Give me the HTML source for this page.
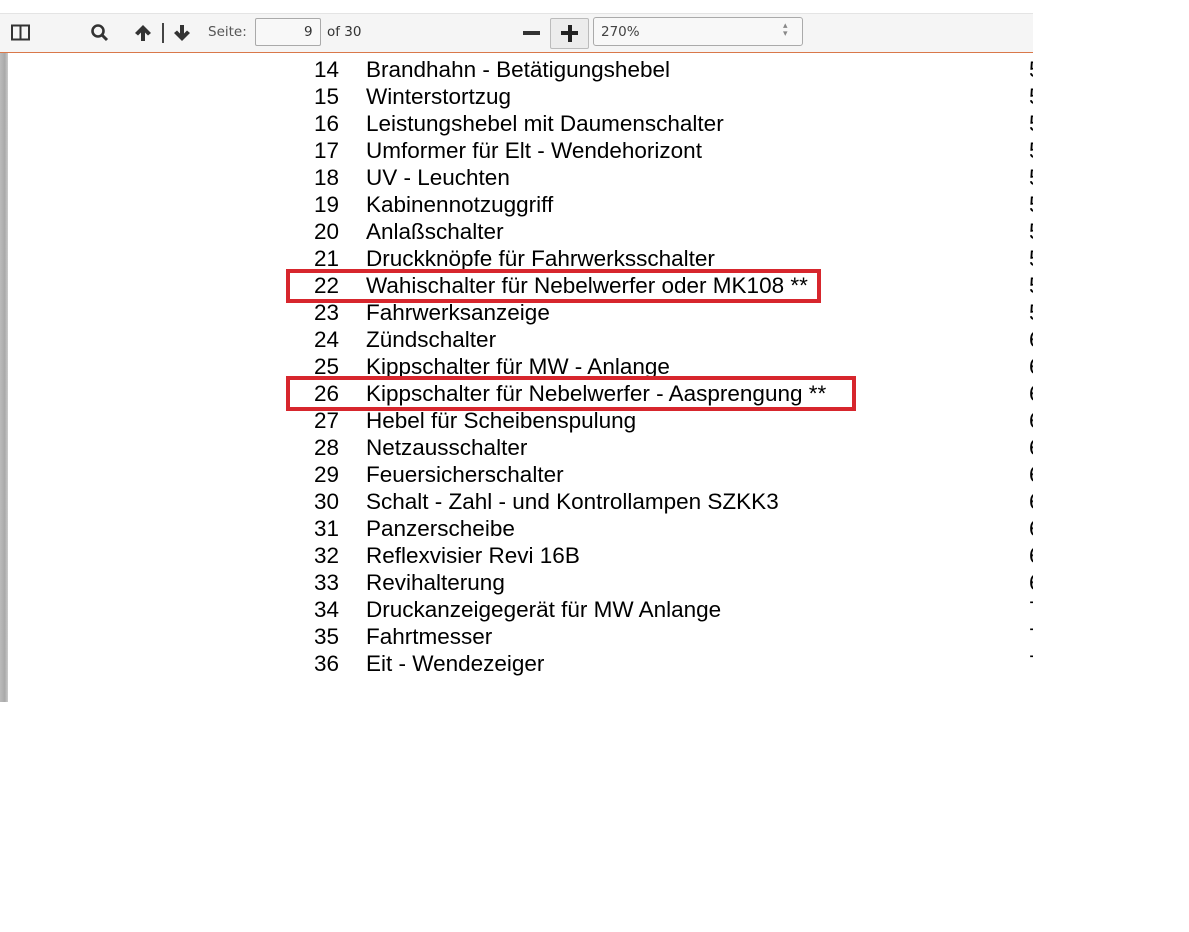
<!DOCTYPE html>
<html><head><meta charset="utf-8"><style>
body{margin:0;width:1189px;height:932px;background:#fff;position:relative;overflow:hidden;font-family:"Liberation Sans",Arial,sans-serif}
.tb{position:absolute;left:0;top:13px;width:1033px;height:38px;background:#f5f5f5;border-top:1px solid #e4e4e4;border-bottom:1px solid #d9784a}
.ui{font-family:"DejaVu Sans","Liberation Sans",sans-serif;font-size:13.5px;color:#555;position:absolute}
.strip{position:absolute;left:0;top:53px;width:8px;height:649px;background:linear-gradient(90deg,#bbb,#a9a9a9 60%,#ccc)}
.row{position:absolute;font-size:22.5px;color:#000;white-space:nowrap;line-height:27px}
.n{position:absolute;left:314px}
.t{position:absolute;left:366px}
.r{position:absolute;left:1029px;width:4px;overflow:hidden}
.box{position:absolute;border:4px solid #d7262d;box-sizing:border-box}
</style></head><body>
<div class="tb">
<svg style="position:absolute;left:11px;top:10px" width="20" height="18"><rect x="1" y="1.5" width="17" height="14" fill="none" stroke="#333" stroke-width="2"/><line x1="9.5" y1="2" x2="9.5" y2="15" stroke="#333" stroke-width="2"/></svg>
<svg style="position:absolute;left:90px;top:9px" width="20" height="20"><circle cx="8" cy="8" r="5.5" fill="none" stroke="#333" stroke-width="2.6"/><line x1="12" y1="12" x2="17" y2="17" stroke="#333" stroke-width="3"/></svg>
<svg style="position:absolute;left:133px;top:9px" width="20" height="20"><path d="M10 2 L2 10 L5 12.5 L8 9.5 V18 H12 V9.5 L15 12.5 L18 10 Z" fill="#333"/></svg>
<div style="position:absolute;left:162px;top:9px;width:2px;height:20px;background:#444"></div>
<svg style="position:absolute;left:172px;top:9px" width="20" height="20"><path d="M10 18 L2 10 L5 7.5 L8 10.5 V2 H12 V10.5 L15 7.5 L18 10 Z" fill="#333"/></svg>
<div class="ui" style="left:208px;top:10px">Seite:</div>
<div style="position:absolute;left:255px;top:4px;width:66px;height:28px;border:1px solid #aaa;border-radius:2px;background:#f8f8f8;box-sizing:border-box"></div>
<div class="ui" style="left:304px;top:10px;color:#333">9</div>
<div class="ui" style="left:327px;top:10px;color:#333">of 30</div>
<div style="position:absolute;left:523px;top:17px;width:17px;height:4px;background:#333"></div>
<div style="position:absolute;left:550px;top:4px;width:39px;height:31px;border:1px solid #bbb;border-radius:2px;background:#ececec;box-sizing:border-box"></div>
<div style="position:absolute;left:561px;top:17px;width:17px;height:4px;background:#222"></div>
<div style="position:absolute;left:567.5px;top:11px;width:4px;height:17px;background:#222"></div>
<div style="position:absolute;left:593px;top:3px;width:210px;height:29px;border:1px solid #aaa;border-radius:3px;background:#f8f8f8;box-sizing:border-box"></div>
<div class="ui" style="left:601px;top:10px;color:#444">270%</div>
<div class="ui" style="left:783px;top:8px;font-size:9px;line-height:8px;color:#888">▴<br>▾</div>
</div>
<div class="strip"></div>
<div style="position:absolute;left:0;top:53px;width:1033px;height:649px;overflow:hidden">
<div style="position:absolute;top:-53px;left:0;width:1033px">
<div class="row" style="top:56px"><span class="n">14</span><span class="t">Brandhahn - Betätigungshebel</span><span class="r">5</span></div>
<div class="row" style="top:83px"><span class="n">15</span><span class="t">Winterstortzug</span><span class="r">5</span></div>
<div class="row" style="top:110px"><span class="n">16</span><span class="t">Leistungshebel mit Daumenschalter</span><span class="r">5</span></div>
<div class="row" style="top:137px"><span class="n">17</span><span class="t">Umformer für Elt - Wendehorizont</span><span class="r">5</span></div>
<div class="row" style="top:164px"><span class="n">18</span><span class="t">UV - Leuchten</span><span class="r">5</span></div>
<div class="row" style="top:191px"><span class="n">19</span><span class="t">Kabinennotzuggriff</span><span class="r">5</span></div>
<div class="row" style="top:218px"><span class="n">20</span><span class="t">Anlaßschalter</span><span class="r">5</span></div>
<div class="row" style="top:245px"><span class="n">21</span><span class="t">Druckknöpfe für Fahrwerksschalter</span><span class="r">5</span></div>
<div class="row" style="top:272px"><span class="n">22</span><span class="t">Wahischalter für Nebelwerfer oder MK108 **</span><span class="r">5</span></div>
<div class="row" style="top:299px"><span class="n">23</span><span class="t">Fahrwerksanzeige</span><span class="r">5</span></div>
<div class="row" style="top:326px"><span class="n">24</span><span class="t">Zündschalter</span><span class="r">6</span></div>
<div class="row" style="top:353px"><span class="n">25</span><span class="t">Kippschalter für MW - Anlange</span><span class="r">6</span></div>
<div class="row" style="top:380px"><span class="n">26</span><span class="t">Kippschalter für Nebelwerfer - Aasprengung **</span><span class="r">6</span></div>
<div class="row" style="top:407px"><span class="n">27</span><span class="t">Hebel für Scheibenspulung</span><span class="r">6</span></div>
<div class="row" style="top:434px"><span class="n">28</span><span class="t">Netzausschalter</span><span class="r">6</span></div>
<div class="row" style="top:461px"><span class="n">29</span><span class="t">Feuersicherschalter</span><span class="r">6</span></div>
<div class="row" style="top:488px"><span class="n">30</span><span class="t">Schalt - Zahl - und Kontrollampen SZKK3</span><span class="r">6</span></div>
<div class="row" style="top:515px"><span class="n">31</span><span class="t">Panzerscheibe</span><span class="r">6</span></div>
<div class="row" style="top:542px"><span class="n">32</span><span class="t">Reflexvisier Revi 16B</span><span class="r">6</span></div>
<div class="row" style="top:569px"><span class="n">33</span><span class="t">Revihalterung</span><span class="r">6</span></div>
<div class="row" style="top:596px"><span class="n">34</span><span class="t">Druckanzeigegerät für MW Anlange</span><span class="r">7</span></div>
<div class="row" style="top:623px"><span class="n">35</span><span class="t">Fahrtmesser</span><span class="r">7</span></div>
<div class="row" style="top:650px"><span class="n">36</span><span class="t">Eit - Wendezeiger</span><span class="r">7</span></div>
<div class="box" style="left:286px;top:269px;width:535px;height:34px"></div>
<div class="box" style="left:286px;top:376px;width:570px;height:35px"></div>
</div></div>
</body></html>
